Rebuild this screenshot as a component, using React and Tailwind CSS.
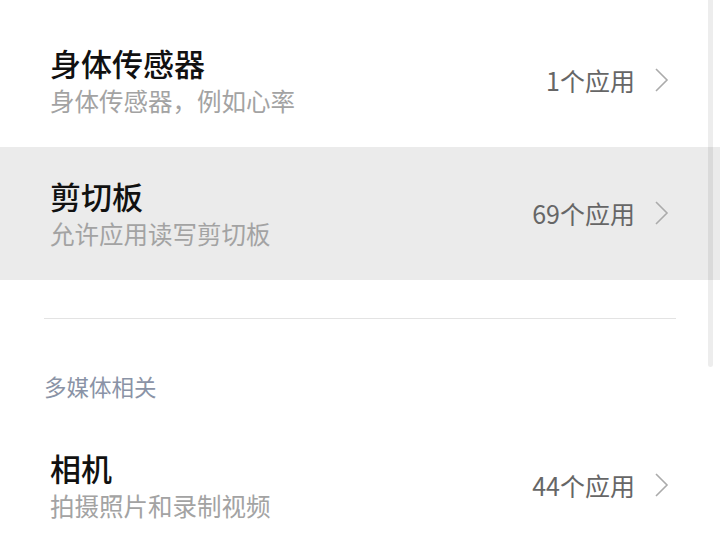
const font = { fontFamily: '"Noto Sans CJK SC", "Noto Sans", sans-serif' };

function Chevron() {
    return (
        <svg width="16" height="24" viewBox="0 0 16 24" className="shrink-0">
            <polyline points="3,1 14,12 3,23" fill="none" stroke="#ababab" strokeWidth="1.6" />
        </svg>
    );
}

function PermRow({ title, desc, count, active }) {
    return (
        <div className={`flex items-center justify-between pl-[50px] pr-[51px] pt-[30px] pb-[27px] ${active ? 'bg-[#ebebeb]' : 'bg-white'}`}>
            <div>
                <div className="text-[31px] leading-[38px] font-medium text-[#111111]">{title}</div>
                <div className="text-[24.5px] leading-[38px] text-[#a3a3a3]">{desc}</div>
            </div>
            <div className="flex items-center gap-[18px] mb-[5px]">
                <span className="text-[25px] leading-[32px] text-[#666666]">{count}</span>
                <Chevron />
            </div>
        </div>
    );
}

export default function App() {
    return (
        <div className="relative w-[720px] h-[548px] overflow-hidden bg-white" style={font}>
            <div className="pt-[14px]">
                <PermRow title="身体传感器" desc="身体传感器，例如心率" count="1个应用" />
                <PermRow title="剪切板" desc="允许应用读写剪切板" count="69个应用" active />
                <div className="mx-[44px] mt-[38px] h-px bg-[#e3e3e3]" />
                <div className="pl-[44px] pt-[51px] pb-[17px] text-[22.5px] leading-[32px] text-[#8a93a6]">多媒体相关</div>
                <PermRow title="相机" desc="拍摄照片和录制视频" count="44个应用" />
            </div>
            {/* scrollbar */}
            <div className="absolute right-[7px] top-0 w-[5px] h-[367px] rounded-b-full bg-[#000]/[0.07]" />
        </div>
    );
}
